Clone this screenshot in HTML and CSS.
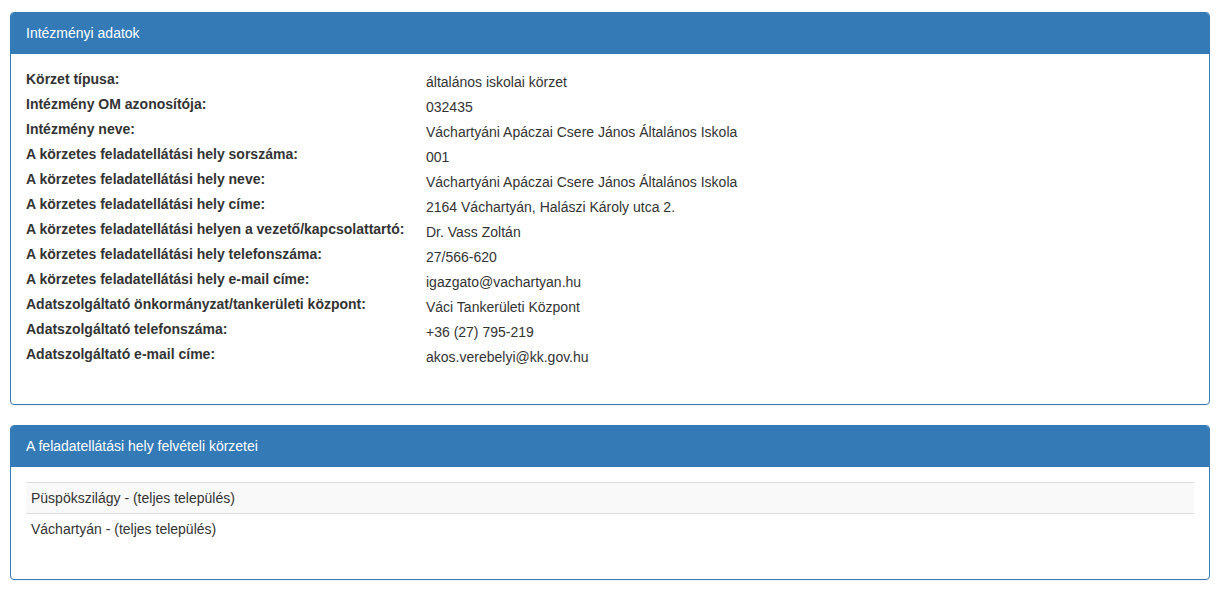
FILE: index.html
```html
<!DOCTYPE html>
<html lang="hu">
<head>
  <meta charset="UTF-8" />
  <meta name="viewport" content="width=device-width, initial-scale=1.0"/>
  <title>Intézményi adatok</title>
  <link rel="stylesheet" href="styles.css">
</head>
<body>
  <div class="container">
    <div class="panel">
      <div class="panel-heading">Intézményi adatok</div>
      <div class="panel-body">
        <div class="data-list">
          <div class="data-row"><label>Körzet típusa:</label><span>általános iskolai körzet</span></div>
          <div class="data-row"><label>Intézmény OM azonosítója:</label><span>032435</span></div>
          <div class="data-row"><label>Intézmény neve:</label><span>Váchartyáni Apáczai Csere János Általános Iskola</span></div>
          <div class="data-row"><label>A körzetes feladatellátási hely sorszáma:</label><span>001</span></div>
          <div class="data-row"><label>A körzetes feladatellátási hely neve:</label><span>Váchartyáni Apáczai Csere János Általános Iskola</span></div>
          <div class="data-row"><label>A körzetes feladatellátási hely címe:</label><span>2164 Váchartyán, Halászi Károly utca 2.</span></div>
          <div class="data-row"><label>A körzetes feladatellátási helyen a vezető/kapcsolattartó:</label><span>Dr. Vass Zoltán</span></div>
          <div class="data-row"><label>A körzetes feladatellátási hely telefonszáma:</label><span>27/566-620</span></div>
          <div class="data-row"><label>A körzetes feladatellátási hely e-mail címe:</label><span>igazgato@vachartyan.hu</span></div>
          <div class="data-row"><label>Adatszolgáltató önkormányzat/tankerületi központ:</label><span>Váci Tankerületi Központ</span></div>
          <div class="data-row"><label>Adatszolgáltató telefonszáma:</label><span>+36 (27) 795-219</span></div>
          <div class="data-row"><label>Adatszolgáltató e-mail címe:</label><span>akos.verebelyi@kk.gov.hu</span></div>
        </div>
      </div>
    </div>

    <div class="panel">
      <div class="panel-heading">A feladatellátási hely felvételi körzetei</div>
      <div class="panel-body">
        <table class="table">
          <tbody>
            <tr><td>Püspökszilágy - (teljes település)</td></tr>
            <tr><td>Váchartyán - (teljes település)</td></tr>
          </tbody>
        </table>
      </div>
    </div>
  </div>
</body>
</html>
```

FILE: styles.css
```css
body {
  font-family: Arial, 'Liberation Sans', sans-serif;
  font-size: 14px;
  line-height: 20px;
  color: #333;
  margin: 0;
  padding: 0;
  background-color: #fff;
}

.container {
  width: 1200px;
  padding: 12px 12px 0 10px;
}

.panel {
  border: 1px solid #337ab7;
  border-radius: 4px;
  background-color: #fff;
  margin-bottom: 20px;
  box-shadow: 0 1px 1px rgba(0,0,0,0.05);
}

.panel-heading {
  background-color: #337ab7;
  color: #fff;
  padding: 10px 15px;
  border-bottom: 1px solid #337ab7;
  border-radius: 3px 3px 0 0;
}

.panel-body {
  padding: 15px;
}

.data-list {
  padding-bottom: 20px;
}

.data-row {
  display: grid;
  grid-template-columns: 400px 1fr;
}

.data-row label {
  font-weight: bold;
  margin-bottom: 5px;
}

.data-row span {
  padding-top: 3px;
}

.table {
  width: 100%;
  border-collapse: collapse;
  margin: 0 0 20px;
}

.table td {
  padding: 5px;
  border-top: 1px solid #ddd;
}

.table tr:nth-child(odd) td {
  background-color: #f9f9f9;
}
```
